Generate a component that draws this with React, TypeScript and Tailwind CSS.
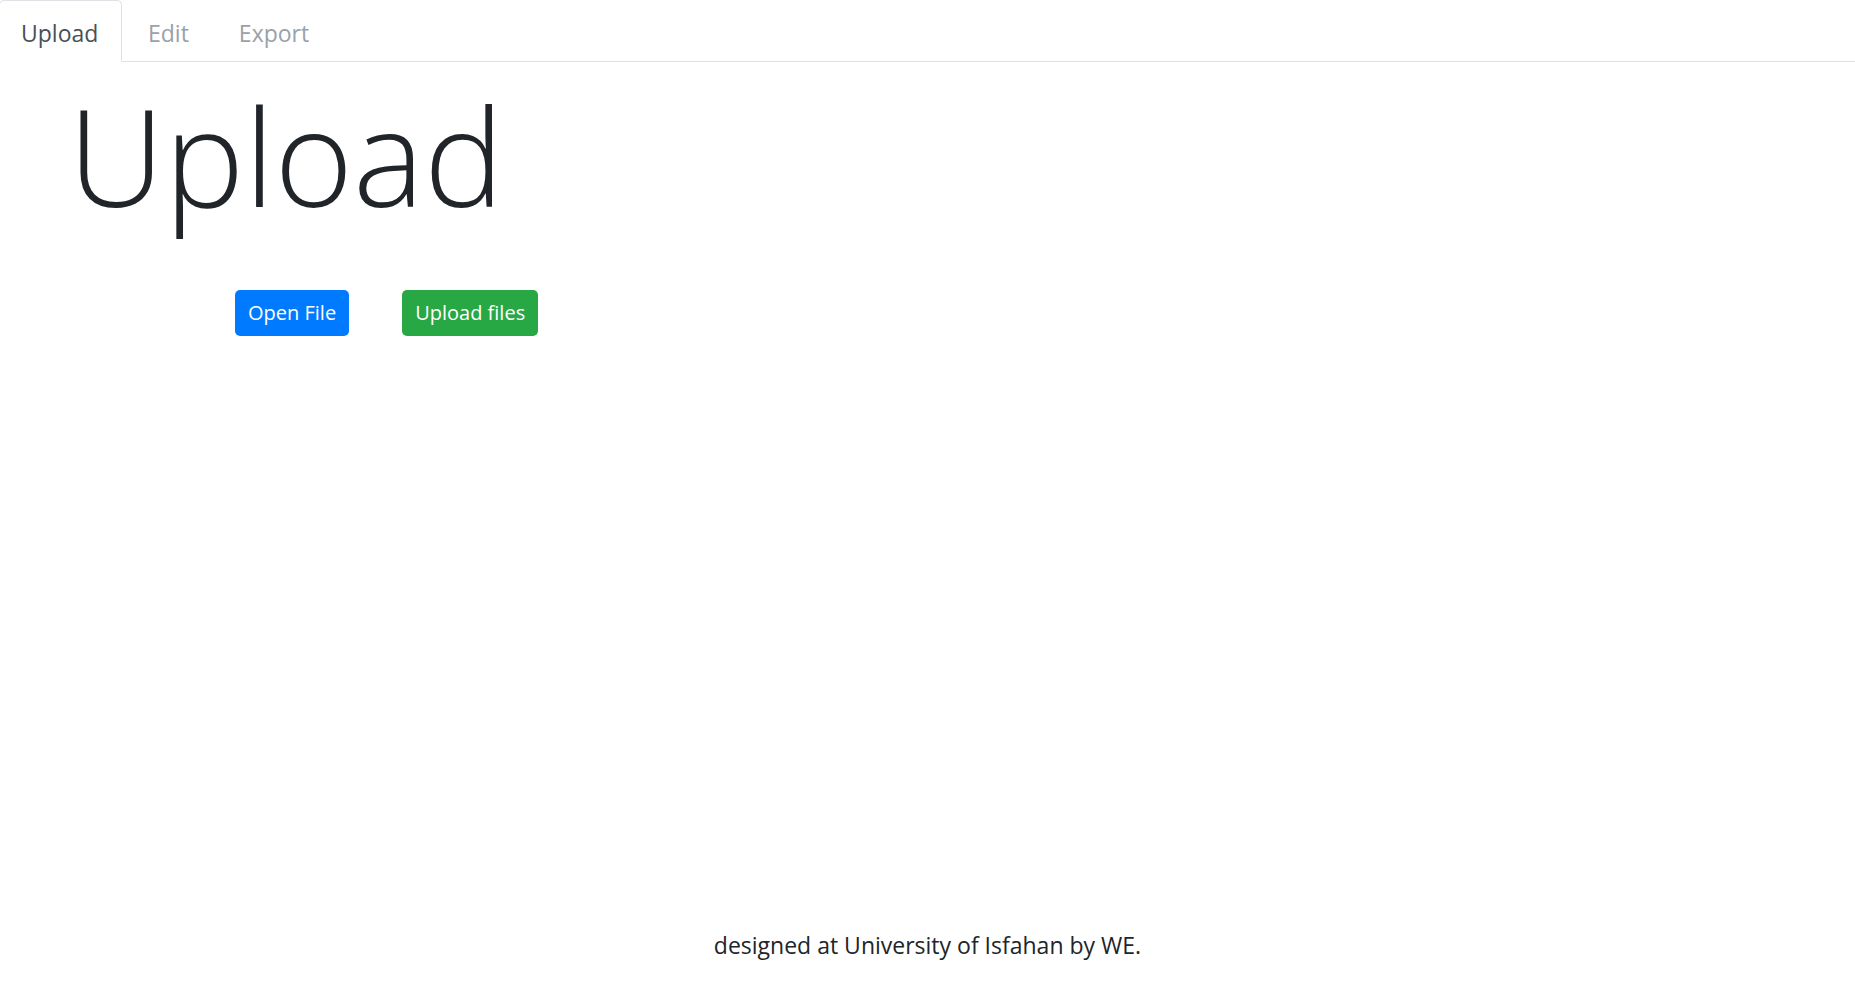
import React from "react";

const font = { fontFamily: '"Open Sans", "Noto Sans", sans-serif' };

export default function App() {
  return (
    <div className="min-h-screen flex flex-col bg-white text-[#212529]" style={font}>
      <ul className="flex border-b border-[#dee2e6] text-[23px] leading-[34px]">
        <li className="-mb-px -ml-px">
          <a className="block w-[123px] border border-[#dee2e6] border-b-white rounded-t-[5px] pl-[21px] pt-[15px] pb-[11px] text-[#495057] bg-white">
            Upload
          </a>
        </li>
        <li>
          <a className="block pl-[26px] pr-[25px] pt-[16px] pb-[11px] text-[#9aa1a8]">Edit</a>
        </li>
        <li>
          <a className="block px-[25px] pt-[16px] pb-[11px] text-[#9aa1a8]">Export</a>
        </li>
      </ul>

      <main className="flex-1">
        <h1 className="pl-[68px] mt-[13px] text-[134px] font-light leading-[1.2] text-[#212529]">
          Upload
        </h1>
        <div className="flex items-center gap-[53px] pl-[235px] mt-[54px]">
          <button
            type="button"
            className="h-[46px] px-[13px] rounded-[5px] bg-[#007bff] text-white text-[20px]"
          >
            Open File
          </button>
          <button
            type="button"
            className="h-[46px] px-[13px] rounded-[5px] bg-[#28a745] text-white text-[20px]"
          >
            Upload files
          </button>
        </div>
      </main>

      <footer className="text-center text-[23px] leading-[34px] pb-[25px] text-[#212529]">
        designed at University of Isfahan by WE.
      </footer>
    </div>
  );
}
